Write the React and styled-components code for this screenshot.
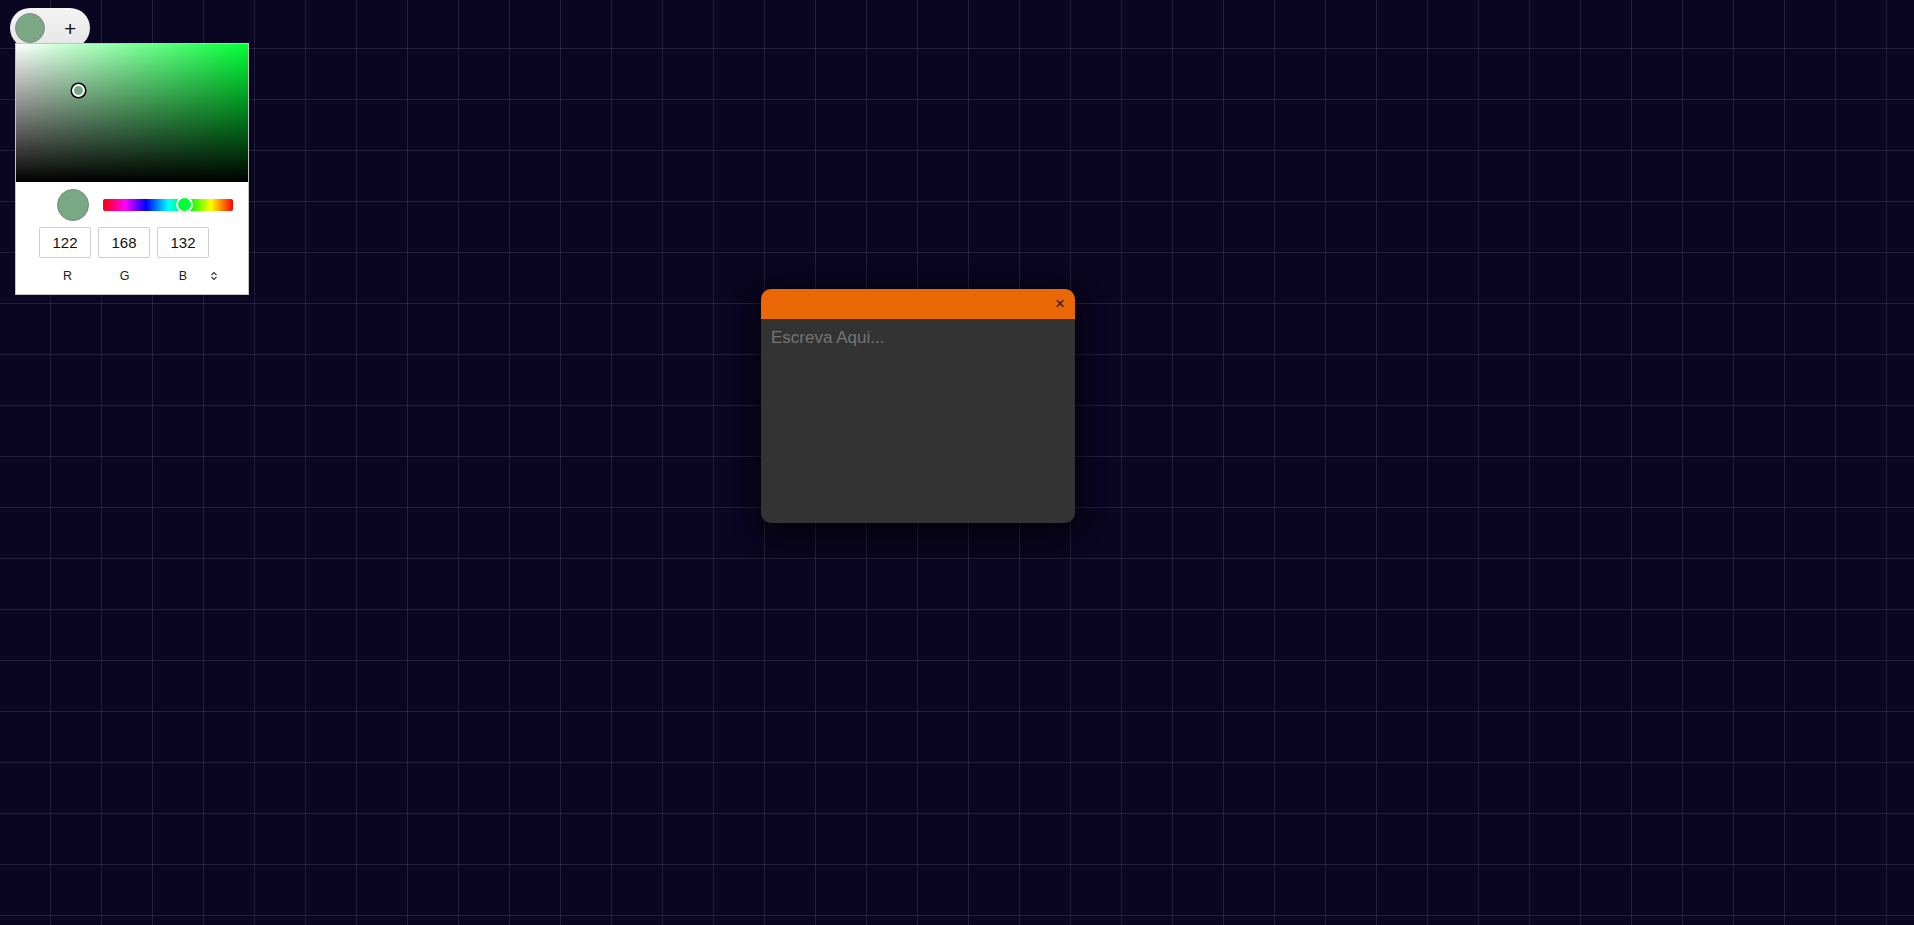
import React, { useState } from "react";
import styled, { createGlobalStyle } from "styled-components";

const GlobalStyle = createGlobalStyle`
  html, body { margin: 0; padding: 0; }
  body { font-family: "Liberation Sans", Arial, sans-serif; background: #0a0520; }
  * { box-sizing: border-box; }
`;

const Canvas = styled.div`
  position: relative;
  width: 100vw;
  height: 100vh;
  overflow: hidden;
  background-color: #0a0520;
  background-image:
    linear-gradient(to right, rgba(255,255,255,0.1) 1px, transparent 1px),
    linear-gradient(to bottom, rgba(255,255,255,0.1) 1px, transparent 1px);
  background-size: 51px 51px;
  background-position: 50px 48px;
`;

const Toolbar = styled.div`
  position: absolute;
  left: 10px;
  top: 8px;
  width: 80px;
  height: 40px;
  border-radius: 20px;
  background: linear-gradient(#f3f3f3, #e6e6e6);
  display: flex;
  align-items: center;
  padding-left: 5px;
  gap: 19px;
`;

const ColorDot = styled.button`
  width: 30px;
  height: 30px;
  border-radius: 50%;
  border: 1px solid #8a8a8a;
  background: ${(p) => p.$color};
  padding: 0;
  cursor: pointer;
`;

const AddButton = styled.button`
  border: none;
  background: transparent;
  font-family: "Liberation Sans", Arial, sans-serif;
  font-size: 21px;
  line-height: 1;
  color: #111;
  padding: 0;
  cursor: pointer;
`;

const Picker = styled.div`
  position: absolute;
  left: 15px;
  top: 43px;
  width: 234px;
  background: #fff;
  border: 1px solid #c4c4c4;
  font-family: "Liberation Sans", Arial, sans-serif;
`;

const Saturation = styled.div`
  position: relative;
  height: 138px;
  background:
    linear-gradient(to top, #000, rgba(0,0,0,0)),
    linear-gradient(to right, #fff, rgba(255,255,255,0)),
    ${(p) => p.$hue};
`;

const SatCursor = styled.div`
  position: absolute;
  width: 13px;
  height: 13px;
  margin: -7px 0 0 -7.5px;
  border-radius: 50%;
  border: 2px solid #fff;
  box-shadow: 0 0 0 1.5px #000;
  background: ${(p) => p.$color};
`;

const PickerBody = styled.div`
  padding: 7px 15px 11px 0;
  display: flex;
  flex-direction: column;
`;

const ControlsRow = styled.div`
  display: flex;
  align-items: center;
  gap: 14px;
  padding-left: 41px;
  height: 32px;
`;

const Swatch = styled.div`
  width: 32px;
  height: 32px;
  flex: none;
  border-radius: 50%;
  border: 1px solid #6e8f75;
  background: ${(p) => p.$color};
`;

const HueTrack = styled.div`
  position: relative;
  flex: 1;
  height: 12px;
  margin-top: -1px;
  border-radius: 2px;
  background: linear-gradient(to right, #f00 0%, #f0f 17%, #00f 33%, #0ff 50%, #0f0 67%, #ff0 83%, #f00 100%);
`;

const HueThumb = styled.div`
  position: absolute;
  top: 50%;
  width: 17px;
  height: 17px;
  margin: -8.5px 0 0 -8.5px;
  border-radius: 50%;
  border: 2px solid #fff;
  box-shadow: 0 0 1px rgba(0,0,0,0.3);
  background: ${(p) => p.$color};
`;

const FieldsRow = styled.div`
  display: grid;
  grid-template-columns: 52px 52px 52px 12px;
  column-gap: 7px;
  row-gap: 11px;
  padding-left: 23px;
  margin-top: 6px;
  align-items: center;
`;

const Field = styled.input`
  width: 52px;
  height: 31px;
  border: 1px solid #cdcdcd;
  border-radius: 2px;
  text-align: center;
  font-family: "Liberation Sans", Arial, sans-serif;
  font-size: 15px;
  color: #111;
  padding: 0;
  outline: none;
`;

const Label = styled.span`
  text-align: center;
  font-size: 12.5px;
  line-height: 14px;
  color: #222;
  padding-left: ${(p) => (p.$nudge ? p.$nudge : 0)}px;
`;

const Toggle = styled.svg`
  display: block;
  margin-left: -6px;
`;

const Note = styled.div`
  position: absolute;
  left: 761px;
  top: 289px;
  width: 314px;
  height: 234px;
  border-radius: 10px;
  overflow: hidden;
  display: flex;
  flex-direction: column;
  background: #333333;
  box-shadow: 0 6px 26px rgba(0,0,0,0.85);
`;

const NoteHeader = styled.div`
  height: 30px;
  flex: none;
  background: #e96705;
  display: flex;
  align-items: center;
  justify-content: flex-end;
  padding-right: 8px;
`;

const CloseButton = styled.button`
  border: none;
  background: transparent;
  color: #2a1a10;
  font-family: "Liberation Sans", Arial, sans-serif;
  font-size: 17px;
  line-height: 1;
  padding: 0 2px 2px;
  cursor: pointer;
`;

const NoteText = styled.textarea`
  flex: 1;
  border: none;
  outline: none;
  resize: none;
  background: transparent;
  color: #e6e6e6;
  font-family: "Liberation Sans", Arial, sans-serif;
  font-size: 17px;
  padding: 9px 10px;
  &::placeholder { color: #757575; }
`;

export default function App() {
  const [rgb, setRgb] = useState({ r: 122, g: 168, b: 132 });
  const color = `rgb(${rgb.r}, ${rgb.g}, ${rgb.b})`;
  const hueDeg = 133;
  const hueColor = `hsl(${hueDeg}, 100%, 50%)`;
  const sat = 0.274;
  const val = 0.659;

  const update = (k) => (e) => setRgb({ ...rgb, [k]: e.target.value });

  return (
    <>
      <GlobalStyle />
      <Canvas>
        <Toolbar>
          <ColorDot $color={color} aria-label="cor" />
          <AddButton>+</AddButton>
        </Toolbar>

        <Picker>
          <Saturation $hue={hueColor}>
            <SatCursor
              $color={color}
              style={{ left: `${sat * 100}%`, top: `${(1 - val) * 100}%` }}
            />
          </Saturation>
          <PickerBody>
            <ControlsRow>
              <Swatch $color={color} />
              <HueTrack>
                <HueThumb $color={hueColor} style={{ left: `${(1 - hueDeg / 360) * 100}%` }} />
              </HueTrack>
            </ControlsRow>
            <FieldsRow>
              <Field value={rgb.r} onChange={update("r")} />
              <Field value={rgb.g} onChange={update("g")} />
              <Field value={rgb.b} onChange={update("b")} />
              <span />
              <Label $nudge={5}>R</Label>
              <Label $nudge={1}>G</Label>
              <Label $nudge={-3}>B</Label>
              <Toggle width="8" height="10" viewBox="0 0 8 10">
                <path d="M1.5 4 L4 1.5 L6.5 4 M1.5 6 L4 8.5 L6.5 6" fill="none" stroke="#333" strokeWidth="1.1" />
              </Toggle>
            </FieldsRow>
          </PickerBody>
        </Picker>

        <Note>
          <NoteHeader>
            <CloseButton>×</CloseButton>
          </NoteHeader>
          <NoteText placeholder="Escreva Aqui..." />
        </Note>
      </Canvas>
    </>
  );
}
